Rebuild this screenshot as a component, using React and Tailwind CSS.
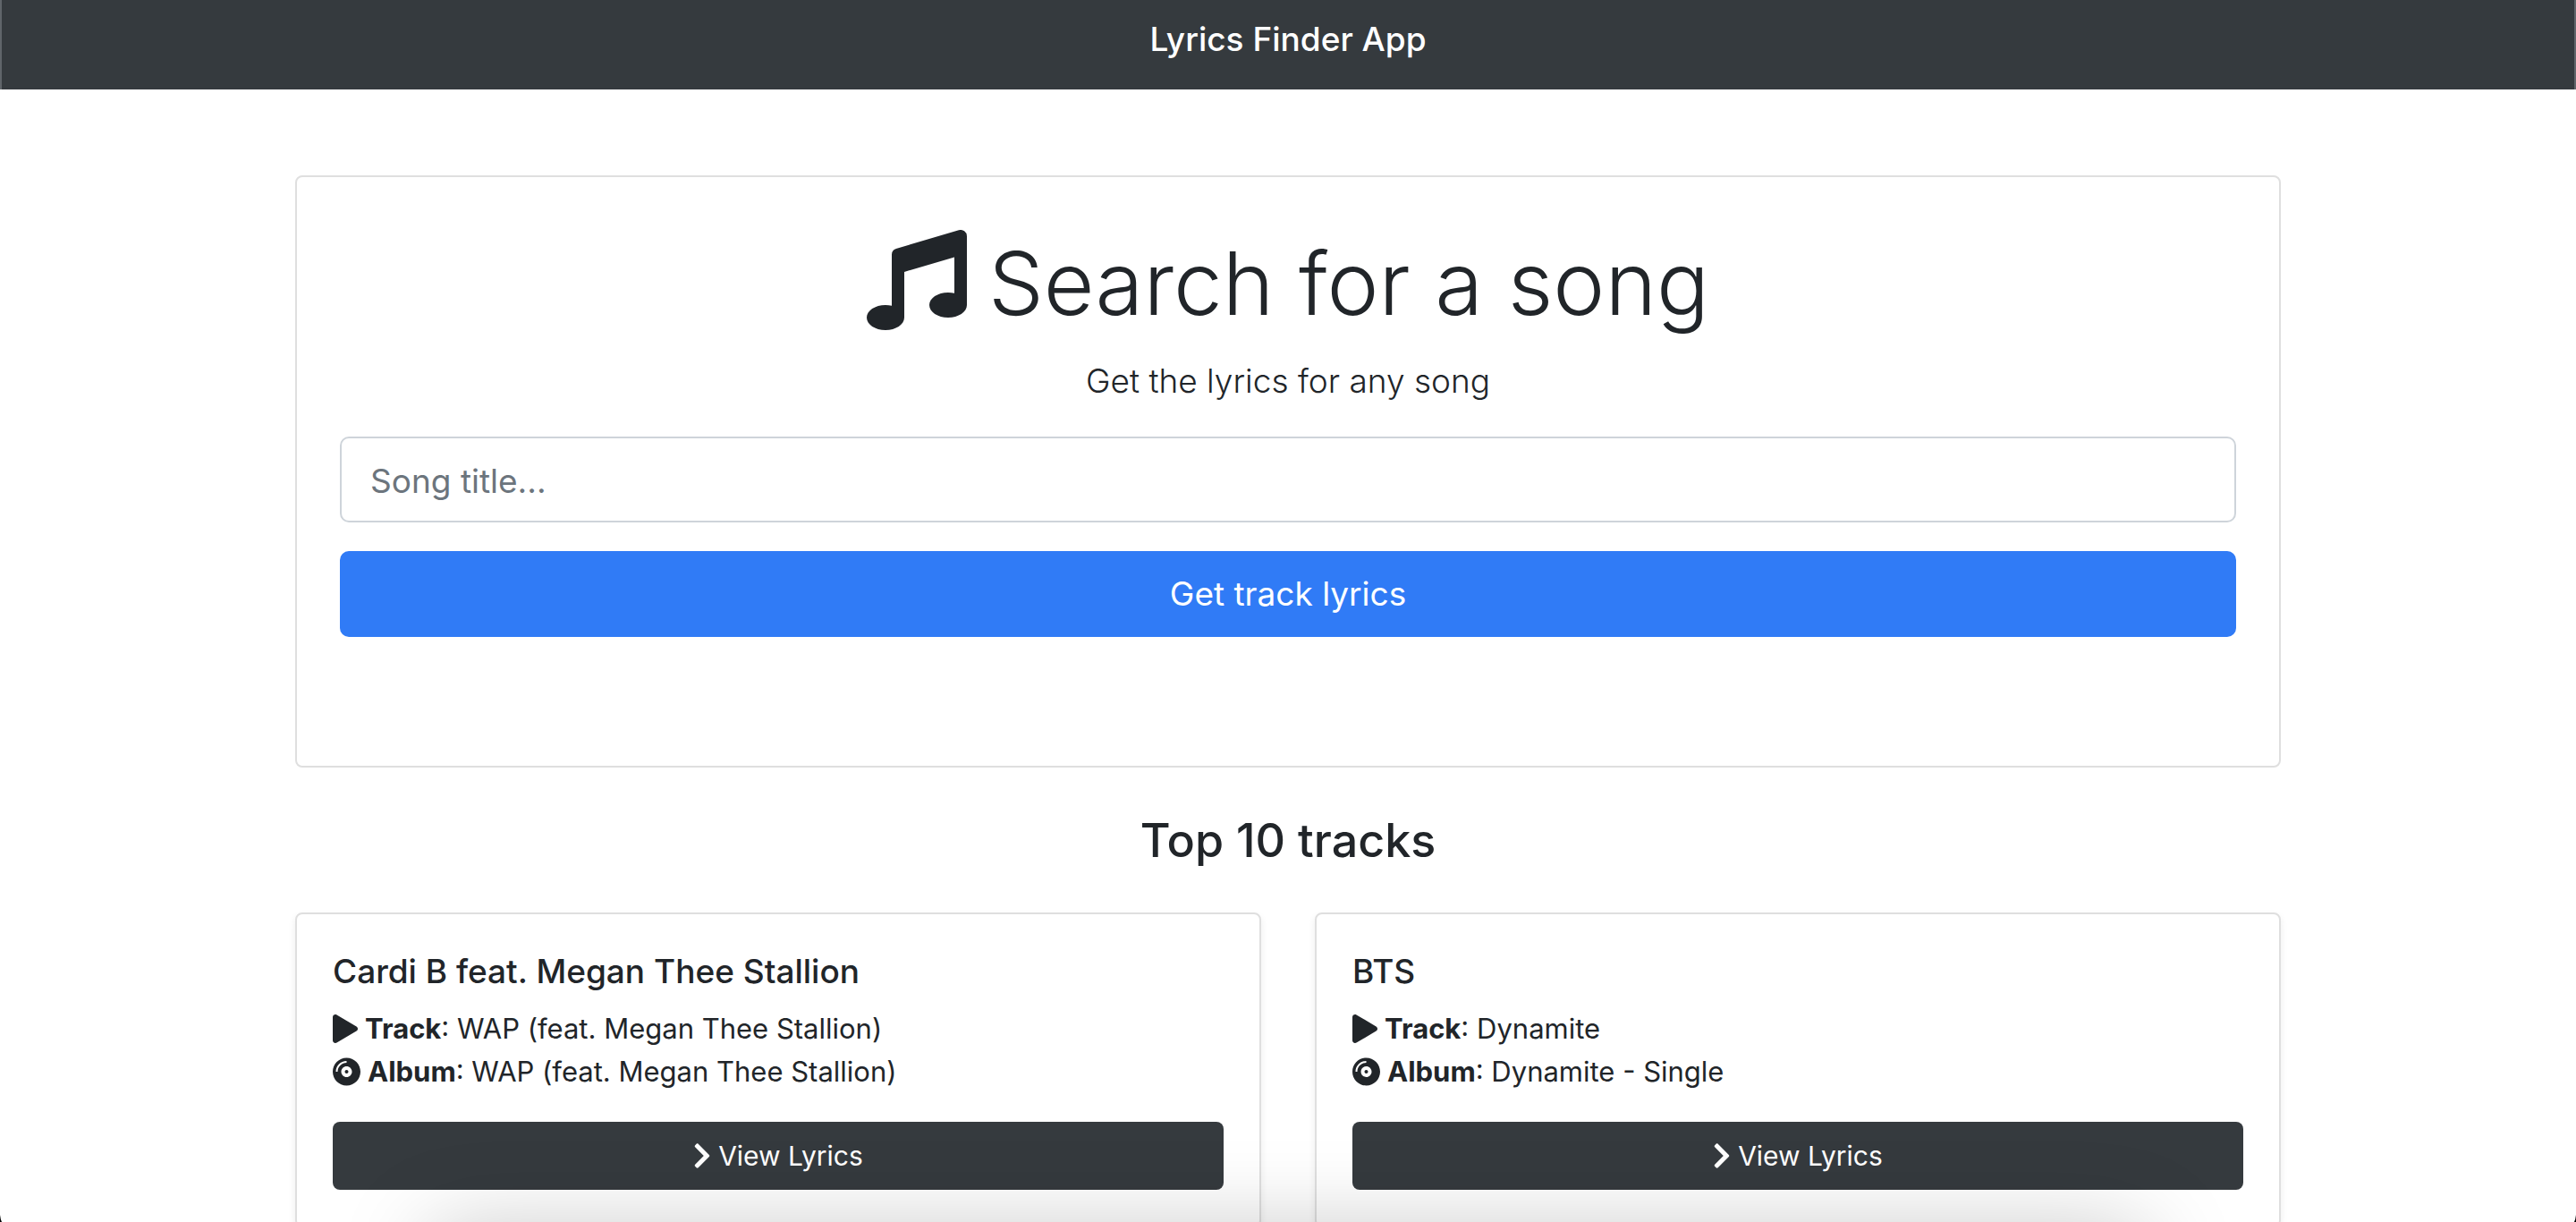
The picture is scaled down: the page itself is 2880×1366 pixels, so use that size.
import { FaMusic, FaPlay, FaCompactDisc, FaChevronRight } from "react-icons/fa";

const tracks = [
  {
    artist: "Cardi B feat. Megan Thee Stallion",
    track: "WAP (feat. Megan Thee Stallion)",
    album: "WAP (feat. Megan Thee Stallion)",
  },
  { artist: "BTS", track: "Dynamite", album: "Dynamite - Single" },
];

function Navbar() {
  return (
    <header className="flex h-[100px] justify-center border-x-2 border-[#60656a] bg-[#353a3e] pt-3.5">
      <span className="text-[37px] leading-[60px] font-medium text-white">Lyrics Finder App</span>
    </header>
  );
}

function SearchCard() {
  return (
    <section className="rounded-lg border-2 border-[#dfdfdf] bg-white px-12 pt-12 pb-36">
      <h1 className="flex items-center justify-center gap-6 text-[98px] leading-[134px] font-light">
        <FaMusic className="size-[112px]" aria-hidden="true" />
        <span className="-mb-1 pt-1">Search for a song</span>
      </h1>
      <p className="mt-4 text-center text-[37px] leading-[60px] font-light">Get the lyrics for any song</p>
      <form className="mt-8 flex flex-col gap-8" onSubmit={(e) => e.preventDefault()}>
        <input
          type="text"
          name="title"
          aria-label="Song title"
          placeholder="Song title..."
          className="h-24 w-full rounded-[10px] border-2 border-[#ced4da] bg-white px-8 pt-0.5 text-[37px] placeholder:text-[#6c757d]"
        />
        <button type="submit" className="h-24 w-full rounded-[10px] bg-[#307bf6] text-[37px] text-white">
          Get track lyrics
        </button>
      </form>
    </section>
  );
}

function TrackCard({ artist, track, album }) {
  return (
    <article className="rounded-lg border-2 border-[#dfdfdf] bg-white p-10 shadow-[0_4px_8px_rgba(0,0,0,0.075)]">
      <h3 className="text-[37px] leading-[48px] font-medium">{artist}</h3>
      <ul className="mt-4 text-[31px] leading-[48px]">
        <li className="flex items-center gap-2">
          <FaPlay className="h-8 w-7 shrink-0" aria-hidden="true" />
          <span>
            <strong className="font-bold">Track</strong>: {track}
          </span>
        </li>
        <li className="flex items-center gap-2">
          <FaCompactDisc className="h-8 w-[31px] shrink-0" aria-hidden="true" />
          <span>
            <strong className="font-bold">Album</strong>: {album}
          </span>
        </li>
      </ul>
      <a
        href="#lyrics"
        className="mt-8 flex h-[76px] items-center justify-center gap-2 rounded-lg bg-[#353a3e] text-[30px] text-white"
      >
        <FaChevronRight className="h-8 w-5" aria-hidden="true" />
        View Lyrics
      </a>
    </article>
  );
}

function WindowEdge() {
  return (
    <div className="pointer-events-none absolute inset-x-0 bottom-0" aria-hidden="true">
      <div className="absolute inset-x-[480px] top-[14px] h-20 rounded-3xl shadow-[0_0_100px_rgba(0,0,0,0.26)]" />
      <svg className="absolute bottom-0 left-0 h-2 w-0.5" viewBox="0 0 2 8">
        <path d="M0 0Q0.5 5 2 8H0Z" fill="#000" />
      </svg>
      <svg className="absolute right-0 bottom-0 h-2 w-0.5" viewBox="0 0 2 8">
        <path d="M2 0Q1.5 5 0 8H2Z" fill="#000" />
      </svg>
    </div>
  );
}

export default function App() {
  return (
    <div className="relative h-screen overflow-hidden bg-white font-['Inter',sans-serif] text-[#212529]">
      <Navbar />
      <main className="mx-auto mt-24 max-w-[2220px]">
        <SearchCard />
        <h2 className="mt-12 mb-12 pt-0.5 text-center text-[52px] leading-[64px] font-medium">Top 10 tracks</h2>
        <div className="grid grid-cols-2 gap-[60px]">
          {tracks.map((t) => (
            <TrackCard key={t.artist} {...t} />
          ))}
        </div>
      </main>
      <WindowEdge />
    </div>
  );
}
